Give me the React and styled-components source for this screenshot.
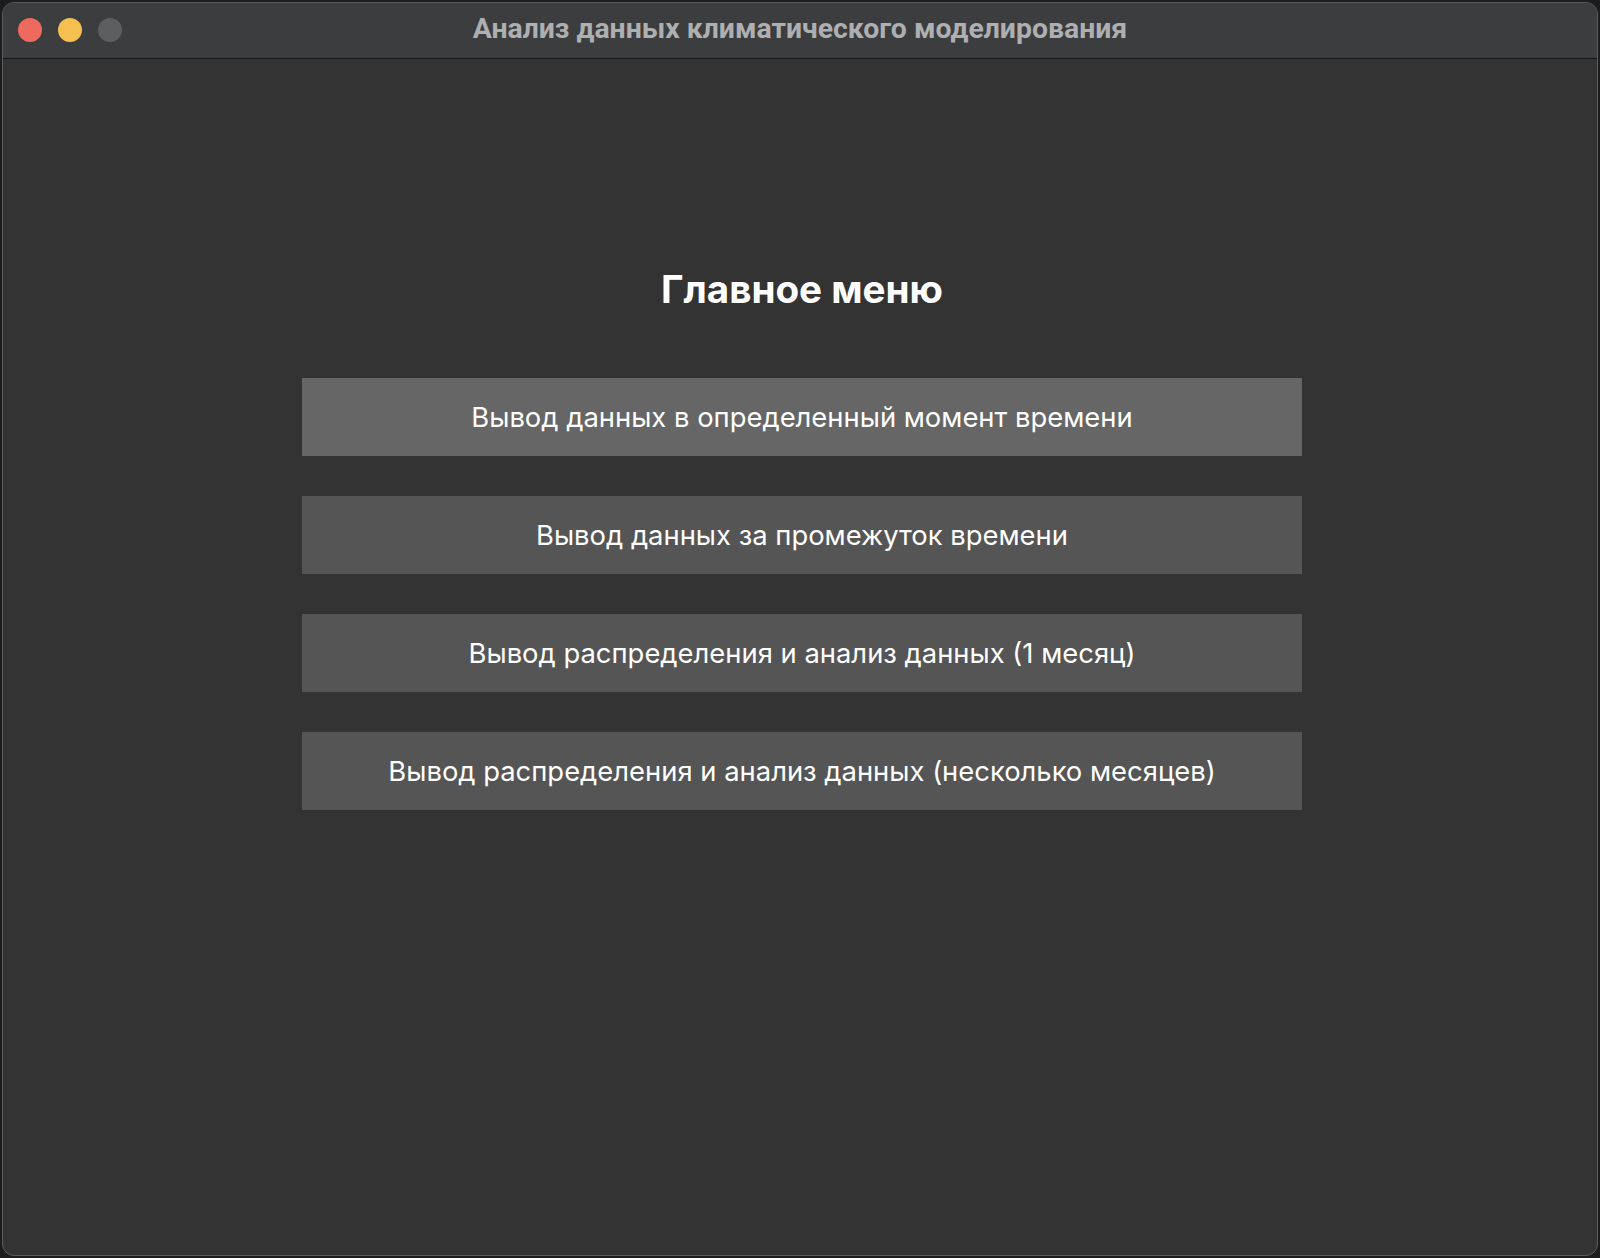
import React from "react";
import styled, { createGlobalStyle } from "styled-components";

const Global = createGlobalStyle`
  html, body { margin: 0; padding: 0; background: #1d1d1d; }
  body { font-family: Inter, "Noto Sans", sans-serif; }
  * { box-sizing: border-box; }
`;

const Screen = styled.div`
  width: 1600px;
  height: 1258px;
  padding: 2px;
`;

const Window = styled.div`
  width: 100%;
  height: 100%;
  border: 1px solid #5c5c5c;
  border-radius: 12px;
  overflow: hidden;
  display: flex;
  flex-direction: column;
  background: #333333;
`;

const TitleBar = styled.div`
  position: relative;
  height: 56px;
  flex: none;
  background: #3c3d3f;
  border-bottom: 1px solid #161616;
  display: flex;
  align-items: center;
  justify-content: center;
  padding-bottom: 4px;
`;

const Lights = styled.div`
  position: absolute;
  left: 15px;
  top: 15px;
  display: flex;
  gap: 16px;
`;

const Light = styled.span`
  width: 24px;
  height: 24px;
  border-radius: 50%;
  background: ${(p) => p.$c};
`;

const Title = styled.div`
  font-family: Roboto, "Liberation Sans", sans-serif;
  font-weight: 700;
  font-size: 28.4px;
  line-height: 34px;
  color: #aeafb1;
`;

const Content = styled.main`
  flex: 1;
  display: flex;
  flex-direction: column;
  align-items: center;
  padding: 207px 0 0 4px;
`;

const Heading = styled.h1`
  margin: 0 0 66px;
  font-family: Inter, "Noto Sans", sans-serif;
  font-weight: 700;
  font-size: 38.6px;
  line-height: 46px;
  color: #ffffff;
`;

const Menu = styled.div`
  display: flex;
  flex-direction: column;
  gap: 40px;
  width: 1000px;
`;

const MenuButton = styled.button`
  height: 78px;
  border: none;
  border-radius: 0;
  background: ${(p) => (p.$active ? "#666666" : "#555555")};
  color: #ffffff;
  font-family: Inter, "Noto Sans", sans-serif;
  font-size: 27.4px;
  font-weight: 400;
  display: flex;
  align-items: center;
  justify-content: center;
  cursor: pointer;
  padding: 0;
`;

const items = [
  "Вывод данных в определенный момент времени",
  "Вывод данных за промежуток времени",
  "Вывод распределения и анализ данных (1 месяц)",
  "Вывод распределения и анализ данных (несколько месяцев)",
];

export default function App() {
  return (
    <>
      <Global />
      <Screen>
        <Window>
          <TitleBar>
            <Lights>
              <Light $c="#ee6a5f" />
              <Light $c="#f5c04f" />
              <Light $c="#5e5e5e" />
            </Lights>
            <Title>Анализ данных климатического моделирования</Title>
          </TitleBar>
          <Content>
            <Heading>Главное меню</Heading>
            <Menu>
              {items.map((t, i) => (
                <MenuButton key={t} $active={i === 0}>
                  {t}
                </MenuButton>
              ))}
            </Menu>
          </Content>
        </Window>
      </Screen>
    </>
  );
}
